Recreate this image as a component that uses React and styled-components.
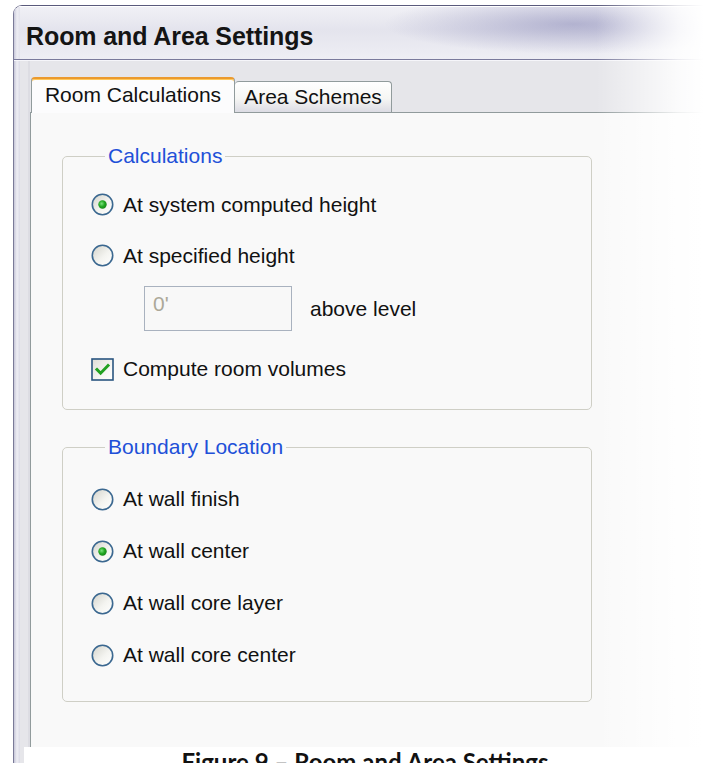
import React from 'react';
import styled, { createGlobalStyle } from 'styled-components';

const Global = createGlobalStyle`
  html, body { margin: 0; padding: 0; background: #fff; }
  body { font-family: "Liberation Sans", Arial, sans-serif; color: #111; }
`;

const Shot = styled.div`
  position: relative;
  width: 713px;
  height: 763px;
  overflow: hidden;
  box-sizing: border-box;
  padding: 5px 0 0 13px;
  background: #fff;
`;

const Window = styled.div`
  width: 780px;
  border-top: 1px solid #5a5a7c;
  border-left: 1px solid #7a7a98;
  border-top-left-radius: 9px;
  overflow: hidden;
  display: flex;
  flex-direction: column;
`;

const TitleBar = styled.div`
  height: 54px;
  box-sizing: border-box;
  padding: 7px 0 0 12px;
  display: flex;
  align-items: center;
  border-bottom: 1px solid #7a7a9c;
  box-shadow: inset 0 1px 0 #ffffff;
  background:
    radial-gradient(ellipse 190px 30px at 560px 18px, rgba(135, 135, 182, 0.55), rgba(135, 135, 182, 0) 100%),
    linear-gradient(to right, #c8c8da 0, #ededf3 3px, #e2e2ec 6px, rgba(0,0,0,0) 6px),
    linear-gradient(to bottom, #f1f1f6 0%, #e4e4ed 45%, #eeeef4 100%);
`;

const Title = styled.h1`
  margin: 0;
  font: bold 25px/28px "Liberation Sans", Arial, sans-serif;
  color: #141414;
  letter-spacing: -0.1px;
`;

const sideBand = `
  linear-gradient(to right, #c6c6d8 0, #eeeef4 3px, #dadae6 6px, rgba(0,0,0,0) 6px)
`;

const Frame = styled.div`
  height: 687px;
  box-sizing: border-box;
  padding: 17px 0 0 16px;
  display: flex;
  flex-direction: column;
  background: ${sideBand}, linear-gradient(to right, #e6e6ea 0, #e6e6ea 14px, #d4d4dc 15px, #e6e6ea 16px);
  background-color: #e6e6ea;
  box-shadow: inset 0 1px 0 #f6f6fa;
`;

const TabStrip = styled.div`
  display: flex;
  align-items: flex-end;
  padding-left: 1px;
  margin-bottom: -1px;
  position: relative;
  z-index: 1;
`;

const Tab = styled.div`
  box-sizing: border-box;
  width: ${p => p.$w}px;
  height: ${p => (p.$active ? 36 : 31)}px;
  margin-bottom: ${p => (p.$active ? 0 : 1)}px;
  display: flex;
  align-items: center;
  justify-content: center;
  font-size: 21px;
  line-height: 24px;
  color: #111;
  border: 1px solid #919b9c;
  border-bottom: none;
  border-radius: 4px 4px 0 0;
  ${p => p.$active
    ? `
      border-top: 2px solid #eb9a2e;
      box-shadow: inset 0 1px 0 #ffc85a;
      background: #fcfcfd;
      padding-bottom: 2px;
    `
    : `
      border-left: none;
      background: linear-gradient(to bottom, #ffffff 0%, #f6f6f4 55%, #dcdce4 100%);
    `}
`;

const Panel = styled.div`
  flex: 1;
  box-sizing: border-box;
  padding-left: 31px;
  border-top: 1px solid #919b9c;
  border-left: 1px solid #919b9c;
  background: #f9f9f9;
`;

const Group = styled.fieldset`
  margin: ${p => p.$top}px 0 0 0;
  width: 530px;
  box-sizing: border-box;
  min-inline-size: 0;
  padding: ${p => p.$pt}px 0 ${p => p.$pb}px 28px;
  border: 1px solid #cfcfc6;
  border-radius: 5px;
`;

const Legend = styled.legend`
  margin-left: 14px;
  padding: 0 3px;
  font-size: 21px;
  line-height: 24px;
  color: #2150d8;
`;

const OptionRow = styled.label`
  display: flex;
  align-items: center;
  height: ${p => p.$h}px;
  font-size: 21px;
  line-height: 24px;
  color: #111;
`;

const Mark = styled.svg`
  flex: none;
  width: 23px;
  height: 23px;
  margin-right: 9px;
`;

const InputRow = styled.div`
  display: flex;
  align-items: center;
  margin-top: 5px;
  height: 45px;
  padding-left: 53px;
  font-size: 21px;
  line-height: 24px;
`;

const TextBox = styled.div`
  box-sizing: border-box;
  width: 148px;
  height: 45px;
  padding: 5px 0 0 8px;
  border: 1px solid #a9b2bf;
  background: #f8f8f8;
  color: #aca899;
  font-size: 21px;
  line-height: 24px;
`;

const Unit = styled.span`
  margin-left: 18px;
  color: #111;
`;

const CheckRow = styled(OptionRow)`
  margin-top: 23px;
`;

const Footer = styled.div`
  display: flex;
  height: 40px;
  padding-left: 10px;
  background: ${sideBand}, #e6e6ea;
`;

const Caption = styled.div`
  flex: none;
  width: 682px;
  padding-right: 100px;
  background: #fff;
  text-align: center;
  font: bold 24px/29px Lato, "Open Sans", sans-serif;
  color: #111;
`;

const CaptionText = styled.span`
  display: inline-block;
  width: 682px;
`;

const Fade = styled.div`
  position: absolute;
  top: 0;
  bottom: 0;
  left: 596px;
  width: 117px;
  pointer-events: none;
  background: linear-gradient(to right, rgba(255,255,255,0) 0%, rgba(255,255,255,0.85) 70%, #fff 92%);
`;

function Radio({ checked, id }) {
  return (
    <Mark viewBox="0 0 23 23">
      <defs>
        <linearGradient id={`rf${id}`} x1="0" y1="0" x2="1" y2="1">
          <stop offset="0" stopColor="#d2d2ca" />
          <stop offset="0.55" stopColor="#f4f4f0" />
          <stop offset="1" stopColor="#ffffff" />
        </linearGradient>
        <radialGradient id={`rd${id}`} cx="0.4" cy="0.4" r="0.6">
          <stop offset="0" stopColor="#7be27b" />
          <stop offset="0.6" stopColor="#21a621" />
          <stop offset="1" stopColor="#1a8a1a" />
        </radialGradient>
      </defs>
      <circle cx="11.5" cy="11.5" r="10.2" fill={`url(#rf${id})`} stroke="#3b6890" strokeWidth="1.6" />
      {checked && <circle cx="11.5" cy="11.5" r="4.2" fill={`url(#rd${id})`} />}
    </Mark>
  );
}

function Check({ id }) {
  return (
    <Mark viewBox="0 0 23 23">
      <defs>
        <linearGradient id={`cf${id}`} x1="0" y1="0" x2="1" y2="1">
          <stop offset="0" stopColor="#dcdcd6" />
          <stop offset="0.6" stopColor="#f6f6f3" />
          <stop offset="1" stopColor="#ffffff" />
        </linearGradient>
      </defs>
      <rect x="1" y="1" width="21" height="21" fill={`url(#cf${id})`} stroke="#2a5580" strokeWidth="1.6" />
      <path d="M6 11.5 L9.6 15.2 L17 7.6" fill="none" stroke="#21a121" strokeWidth="3" strokeLinecap="square" />
    </Mark>
  );
}

const calcOptions = [
  { label: 'At system computed height', checked: true },
  { label: 'At specified height', checked: false },
];

const boundaryOptions = [
  { label: 'At wall finish', checked: false },
  { label: 'At wall center', checked: true },
  { label: 'At wall core layer', checked: false },
  { label: 'At wall core center', checked: false },
];

export default function App() {
  return (
    <>
      <Global />
      <Shot>
        <Window>
          <TitleBar>
            <Title>Room and Area Settings</Title>
          </TitleBar>
          <Frame>
            <TabStrip>
              <Tab $active $w={204}>Room Calculations</Tab>
              <Tab $w={157}>Area Schemes</Tab>
            </TabStrip>
            <Panel>
              <Group $top={31} $pt={11} $pb={25}>
                <Legend>Calculations</Legend>
                {calcOptions.map((o, i) => (
                  <OptionRow key={o.label} $h={51}>
                    <Radio checked={o.checked} id={`c${i}`} />
                    {o.label}
                  </OptionRow>
                ))}
                <InputRow>
                  <TextBox>0'</TextBox>
                  <Unit>above level</Unit>
                </InputRow>
                <CheckRow $h={30}>
                  <Check id="vol" />
                  Compute room volumes
                </CheckRow>
              </Group>
              <Group $top={25} $pt={14} $pb={20}>
                <Legend>Boundary Location</Legend>
                {boundaryOptions.map((o, i) => (
                  <OptionRow key={o.label} $h={52}>
                    <Radio checked={o.checked} id={`b${i}`} />
                    {o.label}
                  </OptionRow>
                ))}
              </Group>
            </Panel>
          </Frame>
          <Footer>
            <Caption>
              <CaptionText>Figure 9 – Room and Area Settings</CaptionText>
            </Caption>
          </Footer>
        </Window>
        <Fade />
      </Shot>
    </>
  );
}
